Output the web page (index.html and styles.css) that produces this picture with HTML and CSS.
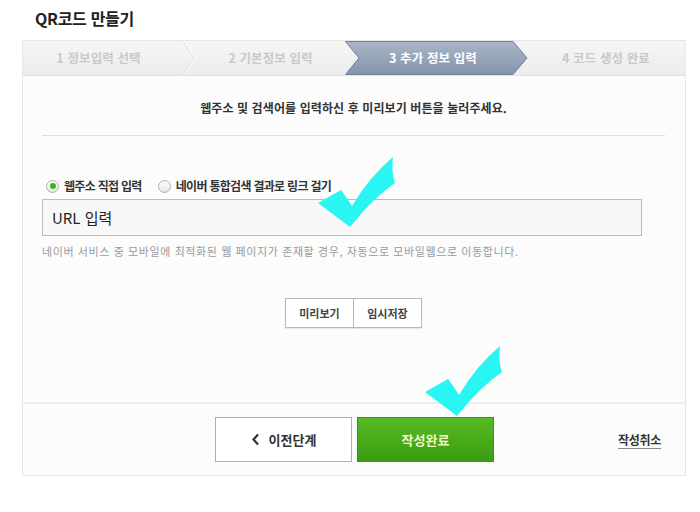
FILE: index.html
```html
<!DOCTYPE html>
<html lang="ko">
<head>
    <meta charset="UTF-8">
    <meta name="viewport" content="width=device-width, initial-scale=1.0">
    <title>QR코드 만들기</title>
    <link rel="stylesheet" href="styles.css">
</head>
<body>
    <h1 class="title">QR코드 만들기</h1>

    <div class="box">
        <ol class="steps">
            <li class="step step-1">1 정보입력 선택
                <svg class="chevron" width="12" height="34" viewBox="0 0 12 34"><polyline points="0,0 11,17 0,34" fill="none" stroke="#dadada" stroke-width="1"/><polyline points="1,0 12,17 1,34" fill="none" stroke="#ffffff" stroke-width="1"/></svg>
            </li>
            <li class="step step-2">2 기본정보 입력</li>
            <li class="step step-3 on">
                <svg class="arrow" width="183" height="34" viewBox="0 0 183 34">
                    <defs>
                        <linearGradient id="act" x1="0" y1="0" x2="0" y2="1">
                            <stop offset="0" stop-color="#a9b6c8"/>
                            <stop offset="1" stop-color="#8494ab"/>
                        </linearGradient>
                    </defs>
                    <polygon points="0.5,0.5 168,0.5 182,17 168,33.5 0.5,33.5 14,17" fill="url(#act)" stroke="#71829b" stroke-width="1"/>
                </svg>
                <span>3 추가 정보 입력</span>
            </li>
            <li class="step step-4">4 코드 생성 완료</li>
        </ol>

        <div class="content">
            <p class="guide">웹주소 및 검색어를 입력하신 후 미리보기 버튼을 눌러주세요.</p>

            <div class="options">
                <label class="radio"><span class="dot checked"></span>웹주소 직접 입력</label>
                <label class="radio"><span class="dot"></span>네이버 통합검색 결과로 링크 걸기</label>
            </div>
            <input type="text" class="url" value="URL 입력">
            <p class="hint">네이버 서비스 중 모바일에 최적화된 웹 페이지가 존재할 경우, 자동으로 모바일웹으로 이동합니다.</p>

            <div class="btn-group">
                <button type="button">미리보기</button>
                <button type="button">임시저장</button>
            </div>
        </div>

        <div class="footer">
            <div class="main-btns">
                <button type="button" class="btn-prev">
                    <svg width="9" height="13" viewBox="0 0 9 13"><polyline points="7,1.5 2.5,6.5 7,11.5" fill="none" stroke="#333" stroke-width="2.2"/></svg>
                    이전단계
                </button>
                <button type="button" class="btn-done">작성완료</button>
            </div>
            <a href="#" class="cancel">작성취소</a>
        </div>
    </div>

    <!-- annotation marks -->
    <svg class="mark mark-1" width="84" height="76" viewBox="0 0 84 76"><path d="M3 49 L26 36 Q32 44 37 52 Q55 22 78 3 Q76 18 80 29 Q58 44 35 73 Z" fill="#29f5f2"/></svg>
    <svg class="mark mark-2" width="84" height="76" viewBox="0 0 84 76"><path d="M3 49 L26 36 Q32 44 37 52 Q55 22 78 3 Q76 18 80 29 Q58 44 35 73 Z" fill="#29f5f2"/></svg>
</body>
</html>
```

FILE: styles.css
```css
body {
    margin: 0;
    background-color: #fff;
    font-family: "Noto Sans CJK KR", "Noto Sans", sans-serif;
    color: #333;
    position: relative;
    width: 700px;
    height: 512px;
}

.title {
    margin: 0;
    padding: 6px 0 0 35px;
    height: 34px;
    box-sizing: border-box;
    font-size: 16px;
    line-height: 24px;
    font-weight: bold;
    letter-spacing: -0.3px;
    color: #222;
}

.box {
    margin-left: 22px;
    width: 664px;
    box-sizing: border-box;
    border: 1px solid #e8e8e8;
    border-top: 0;
    background-color: #fcfcfc;
    margin-top: 6px;
}

/* step bar */
.steps {
    list-style: none;
    margin: 0;
    padding: 0;
    display: flex;
    height: 34px;
    background: linear-gradient(#f6f6f6, #ececec);
    border-top: 1px solid #e6e6e6;
    border-bottom: 1px solid #e2e2e2;
}

.step {
    position: relative;
    box-sizing: border-box;
    height: 34px;
    line-height: 34px;
    text-align: center;
    font-size: 12.5px;
    font-weight: bold;
    color: #c9c9c9;
    letter-spacing: 0.1px;
}

.step-1 {
    width: 161px;
    padding-right: 10px;
}

.step-1 .chevron {
    position: absolute;
    right: -11px;
    top: 0;
}

.step-2 {
    width: 161px;
    padding-left: 12px;
}

.step-3 {
    width: 168px;
    color: #fff;
    padding-left: 8px;
}

.step-3 .arrow {
    position: absolute;
    left: 0;
    top: 0;
}

.step-3 span {
    position: relative;
}

.step-4 {
    flex: 1;
    padding-left: 14px;
}

/* content */
.content {
    padding: 0 20px 74px 19px;
}

.guide {
    margin: 0;
    padding: 24px 0 19px;
    border-bottom: 1px solid #dedede;
    text-align: center;
    font-size: 12px;
    line-height: 16px;
    font-weight: bold;
    color: #333;
    letter-spacing: 0.1px;
}

.options {
    display: flex;
    gap: 16px;
    margin-top: 42px;
    padding-left: 4px;
}

.radio {
    display: flex;
    align-items: center;
    gap: 5px;
    font-size: 12px;
    line-height: 16px;
    font-weight: bold;
    color: #333;
    letter-spacing: -0.7px;
}

.dot {
    width: 13px;
    height: 13px;
    box-sizing: border-box;
    border-radius: 50%;
    border: 1px solid #b0b0b0;
    background: linear-gradient(#fff, #e6e6e6);
    position: relative;
}

.dot.checked::after {
    content: "";
    position: absolute;
    left: 2.5px;
    top: 2.5px;
    width: 6px;
    height: 6px;
    border-radius: 50%;
    background-color: #37b51c;
}

.url {
    display: block;
    margin-top: 5px;
    width: 600px;
    height: 37px;
    box-sizing: border-box;
    padding: 0 9px;
    border: 1px solid #bcbcbc;
    background-color: #f8f8f8;
    font-family: "Noto Sans CJK KR", sans-serif;
    font-size: 15px;
    color: #222;
    outline: none;
}

.hint {
    margin: 8px 0 0;
    font-size: 11px;
    line-height: 14px;
    color: #9a9a9a;
    letter-spacing: 0.6px;
}

.btn-group {
    display: flex;
    justify-content: center;
    margin-top: 40px;
}

.btn-group button {
    width: 69px;
    height: 30px;
    padding: 0;
    border: 1px solid #b8b8b8;
    background-color: #fff;
    font-family: "Noto Sans CJK KR", sans-serif;
    font-size: 11px;
    font-weight: bold;
    color: #444;
    box-shadow: 0 1px 1px rgba(0, 0, 0, 0.08);
}

.btn-group button + button {
    margin-left: -1px;
}

/* footer */
.footer {
    display: grid;
    grid-template-columns: 1fr auto 1fr;
    align-items: center;
    height: 73px;
    box-sizing: border-box;
    border-top: 2px solid #eeeeee;
}

.main-btns {
    grid-column: 2;
    display: flex;
    gap: 5px;
    margin-left: 1px;
}

.main-btns button {
    width: 137px;
    height: 45px;
    font-family: "Noto Sans CJK KR", sans-serif;
    font-size: 13px;
    font-weight: bold;
    cursor: pointer;
}

.btn-prev {
    display: flex;
    align-items: center;
    justify-content: center;
    gap: 9px;
    background-color: #fff;
    border: 1px solid #aeaeb4;
    color: #333;
}

.btn-done {
    background: linear-gradient(#57bb23, #3c9c12);
    border: 1px solid #3a9412;
    color: #eef8c4;
}

.cancel {
    grid-column: 3;
    justify-self: end;
    margin-right: 24px;
    margin-bottom: 0;
    font-size: 12px;
    font-weight: bold;
    color: #333;
    text-decoration: underline;
    text-decoration-color: #888;
    text-underline-offset: 3px;
    letter-spacing: -0.3px;
}

.mark {
    position: absolute;
}

.mark-1 {
    left: 315px;
    top: 154px;
}

.mark-2 {
    left: 422px;
    top: 343px;
}
```
